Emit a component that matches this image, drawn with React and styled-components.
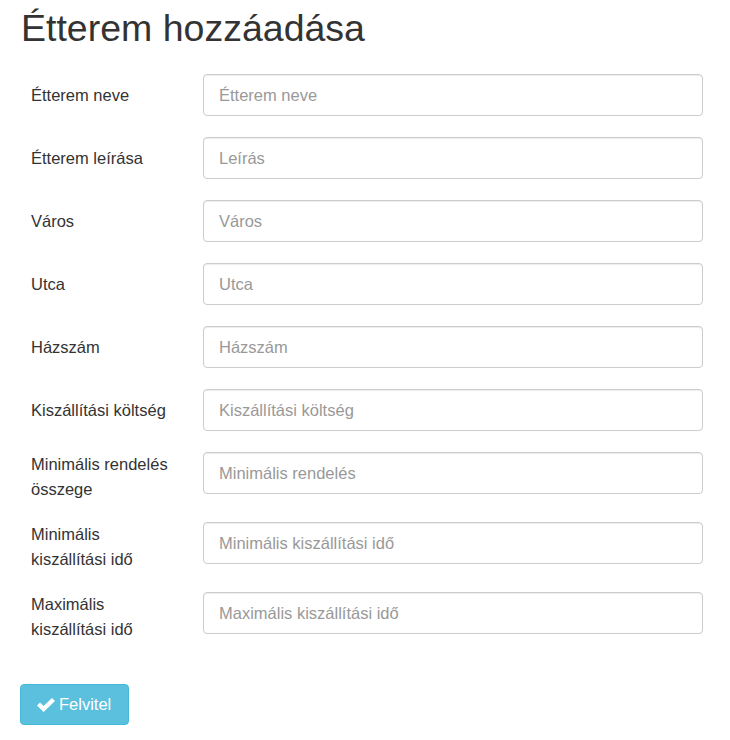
import React from "react";
import styled, { createGlobalStyle } from "styled-components";

const Global = createGlobalStyle`
  html, body { margin: 0; padding: 0; background: #fff; }
  body {
    font-family: "Liberation Sans", Arial, Helvetica, sans-serif;
    font-size: 16.5px;
    color: #333;
  }
  * { box-sizing: border-box; }
`;

const Page = styled.div`
  padding: 0 27px 0 20px;
`;

const Title = styled.h1`
  margin: 8px 0 25px;
  padding-left: 1px;
  font-size: 37.5px;
  font-weight: 400;
  line-height: 1.1;
  color: #333;
`;

const Form = styled.form`
  display: flex;
  flex-direction: column;
  gap: 21px;
  padding-left: 11px;
`;

const Row = styled.div`
  display: flex;
  align-items: flex-start;
  gap: 30px;
`;

const Label = styled.label`
  flex: 0 0 142px;
  min-height: 42px;
  display: flex;
  align-items: center;
  font-size: 16.5px;
  line-height: 24.5px;
  color: #333;
`;

const Input = styled.input`
  flex: 1;
  min-width: 0;
  height: 42px;
  padding: 0 15px;
  font-family: inherit;
  font-size: 16.5px;
  color: #555;
  background: #fff;
  border: 1px solid #ccc;
  border-radius: 4px;
  box-shadow: inset 0 1px 1px rgba(0, 0, 0, 0.075);
  outline: none;
  &::placeholder { color: #999; opacity: 1; }
`;

const Actions = styled.div`
  margin-top: 43px;
`;

const Button = styled.button`
  display: inline-flex;
  align-items: center;
  gap: 4px;
  height: 41px;
  padding: 0 17px 0 16px;
  font-family: inherit;
  font-size: 16.5px;
  color: #fff;
  background: #5bc0de;
  border: 1px solid #46b8da;
  border-radius: 4px;
  cursor: pointer;
`;

const CheckIcon = () => (
  <svg width="18" height="14" viewBox="0 0 18 14" aria-hidden="true">
    <path d="M0 7.6 L3 4.6 L6.6 8.1 L15 0 L18 3 L6.6 14 Z" fill="#fff" />
  </svg>
);

const fields = [
  ["Étterem neve", "Étterem neve"],
  ["Étterem leírása", "Leírás"],
  ["Város", "Város"],
  ["Utca", "Utca"],
  ["Házszám", "Házszám"],
  ["Kiszállítási költség", "Kiszállítási költség"],
  ["Minimális rendelés összege", "Minimális rendelés"],
  ["Minimális kiszállítási idő", "Minimális kiszállítási idő"],
  ["Maximális kiszállítási idő", "Maximális kiszállítási idő"],
];

export default function App() {
  return (
    <Page>
      <Global />
      <Title>Étterem hozzáadása</Title>
      <Form onSubmit={(e) => e.preventDefault()}>
        {fields.map(([label, ph], i) => (
          <Row key={i}>
            <Label htmlFor={`f${i}`}>{label}</Label>
            <Input id={`f${i}`} type="text" placeholder={ph} />
          </Row>
        ))}
      </Form>
      <Actions>
        <Button type="button">
          <CheckIcon />
          Felvitel
        </Button>
      </Actions>
    </Page>
  );
}
